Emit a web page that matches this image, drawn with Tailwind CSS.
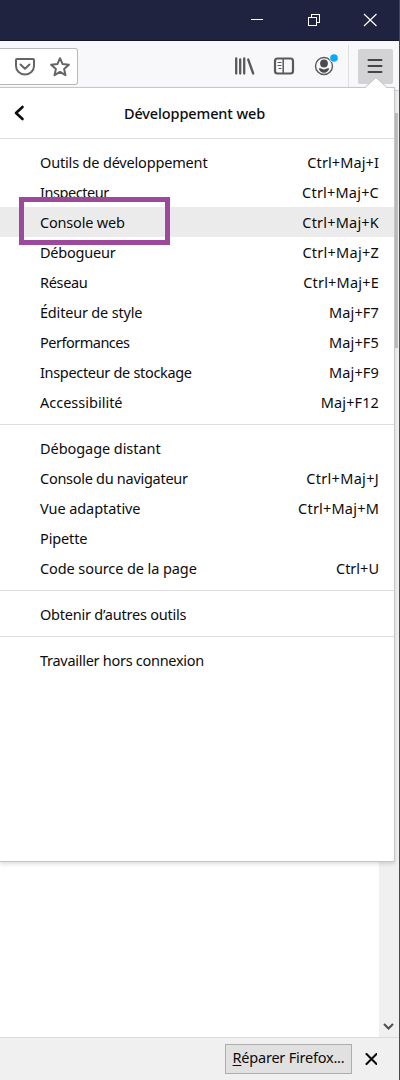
<!DOCTYPE html>
<html lang="fr">
<head>
<meta charset="utf-8">
<title>Développement web</title>
<script src="https://cdn.jsdelivr.net/npm/@tailwindcss/browser@4"></script>
</head>
<body class="bg-white overflow-hidden">
<div class="relative flex h-[1080px] w-[400px] flex-col overflow-hidden border-r border-[#484848] bg-white font-['Noto_Sans','Open_Sans',sans-serif] text-[14.5px] text-[#0c0c0d]">
  <!-- Title bar -->
  <header class="flex h-[41px] shrink-0 items-center justify-end border-b border-[#15172f] bg-[#202340]">
    <svg class="h-10 w-[171px]" viewBox="0 0 171 40" fill="none" stroke="#fff" stroke-width="1" shape-rendering="crispEdges">
      <path d="M23 19.5h12"/>
      <path d="M80.500 17.500h8v8h-8zM83.500 17v-2.500h8v8h-2.500"/>
      <path shape-rendering="auto" stroke-width="1.150" d="M136 14l12.500 12M148.500 14L136 26"/>
    </svg>
  </header>
  <!-- Toolbar -->
  <nav class="flex h-[50px] shrink-0 items-start border-b border-[#d5d5d7] bg-[#f8f8fa]">
    <div class="mt-[7px] flex h-[37px] w-[78px] items-center rounded-r-[3px] border border-l-0 border-[#b8b8ba] bg-white pl-[14px]">
      <svg class="h-5 w-[22px]" viewBox="0 0 22 20" fill="none" stroke="#656566" stroke-width="2" stroke-linecap="round" stroke-linejoin="round"><path d="M3 2h16a1 1 0 0 1 1 1v6a9 8.500 0 0 1-18 0V3a1 1 0 0 1 1-1z"/><path d="M6.500 7.500L11 11.800l4.500-4.300"/></svg>
      <svg class="ml-[13px] h-[22px] w-[22px]" viewBox="0 0 22 22" fill="none" stroke="#656566" stroke-width="2" stroke-linejoin="round"><path d="M11 2.200l2.600 5.900 6.300.600-4.800 4.200 1.400 6.300-5.500-3.300-5.500 3.300 1.400-6.300-4.800-4.200 6.300-.600z"/></svg>
    </div>
    <div class="ml-[155px] flex h-[50px] items-center">
      <svg class="h-[50px] w-[110px]" viewBox="0 0 110 50" fill="none" stroke="#59595b" stroke-width="2" stroke-linecap="round">
        <path d="M3.200 17.500v15M7.200 18.500v14M11.200 17.500v15M15.200 18.500l5 14" stroke-width="2.300"/>
        <rect x="42" y="17.500" width="18" height="15" rx="2.500" stroke-width="2.200"/><path d="M50.200 18v14" stroke-width="1.500"/><path d="M45 21.500h3M45 24.500h3M46 27.500h2" stroke-width="1.200"/>
        <circle cx="91" cy="25" r="8.500" stroke-width="1.400"/>
        <circle cx="91" cy="22.500" r="3.900" fill="#4b4b4d" stroke="none"/><path d="M85.800 27.500c2.500-.8 3.200 1 5.200 1s2.700-1.800 5.200-1c-.6 2.400-2.600 4.200-5.200 4.200s-4.600-1.800-5.200-4.200z" fill="#4b4b4d" stroke="none"/>
        <circle cx="101" cy="17" r="4.600" fill="#f8f8fa" stroke="none"/><circle cx="101" cy="17" r="3.800" fill="#0aa9f5" stroke="none"/>
      </svg>
    </div>
    <div class="mt-1 ml-[5px] h-[43px] w-px bg-[#dfdfe2]"></div>
    <div class="mt-2 ml-[9px] flex h-[35px] w-[35px] items-start rounded-[2px] bg-[#d3d3d5]">
      <svg class="mt-2 ml-2 h-[18px] w-[18px]" viewBox="0 0 18 18" stroke="#454547" stroke-width="2" stroke-linecap="round"><path d="M2.500 3h13M2.500 9h13M2.500 15h13"/></svg>
    </div>
  </nav>
  <!-- Page area with its scrollbar -->
  <main class="flex min-h-0 flex-1 justify-end">
    <div class="flex w-5 flex-col bg-[#f0f0f0] pt-[22px]">
      <div class="ml-[2px] h-[235px] w-[17px] bg-[#c2c2c2]"></div>
      <svg class="mt-auto mb-[5px] ml-1 h-[10px] w-[11px]" viewBox="0 0 11 10" fill="none" stroke="#505050" stroke-width="2.100"><path d="M1 2l4.500 4.500L10 2"/></svg>
    </div>
  </main>
  <!-- Notification bar -->
  <footer class="flex h-[43px] shrink-0 items-center justify-end border-t border-[#dcdcdc] bg-[#f0f0f0]">
    <button class="mt-[-1px] h-[30px] w-[127px] border border-[#adadad] bg-[#e1e1e1] pb-0.5 whitespace-nowrap tracking-[-0.22px]"><span class="underline underline-offset-2">R</span>éparer Firefox...</button>
    <svg class="mr-[22px] ml-[13px] h-3 w-3" viewBox="0 0 12 12" stroke="#0c0c0d" stroke-width="2.100" stroke-linecap="round"><path d="M1.500 1l10 10M11.500 1L1.500 11"/></svg>
  </footer>

  <!-- Developer panel -->
  <section class="absolute top-[87px] left-0 h-[775px] w-[395px] border-t border-r border-b border-[#c6c6c7] bg-white shadow-[0_2px_4px_rgba(0,0,0,0.14)]">
    <svg class="absolute -top-[11px] right-[7px] h-[11px] w-[22px]" viewBox="0 0 22 11"><path d="M0 11L11 .5 22 11z" fill="#fff"/><path d="M0 10.500L11 .5l11 10" fill="none" stroke="#c0c0c2"/></svg>
    <div class="relative flex h-[51px] items-center border-b border-[#dedede]">
      <svg class="ml-[13px] h-4 w-3" viewBox="0 0 12 16" fill="none" stroke="#0c0c0d" stroke-width="2.600" stroke-linecap="round" stroke-linejoin="round"><path d="M9.500 2L3 8l6.500 6"/></svg>
      <h1 class="mr-[30px] flex-1 pt-0.5 text-center font-medium tracking-[-0.12px]">Développement web</h1>
    </div>
    <ul class="py-2 [&>li]:flex [&>li]:h-[30px] [&>li]:items-center [&>li]:justify-between [&>li]:pt-0.5 [&>li]:pr-[15px] [&>li]:pl-10">
      <li><span class="tracking-[-0.17px]">Outils de développement</span><span class="tracking-[0.1px]">Ctrl+Maj+I</span></li>
      <li><span class="tracking-[-0.45px]">Inspecteur</span><span class="tracking-[0.2px]">Ctrl+Maj+C</span></li>
      <li class="bg-[#ebebeb]"><span class="tracking-[-0.18px]">Console web</span><span class="tracking-[0.2px]">Ctrl+Maj+K</span></li>
      <li><span class="tracking-[-0.22px]">Débogueur</span><span class="tracking-[0.25px]">Ctrl+Maj+Z</span></li>
      <li><span class="tracking-[-0.33px]">Réseau</span><span class="tracking-[0.2px]">Ctrl+Maj+E</span></li>
      <li><span class="tracking-[-0.19px]">Éditeur de style</span><span class="tracking-[0.16px]">Maj+F7</span></li>
      <li><span class="tracking-[-0.5px]">Performances</span><span class="tracking-[0.16px]">Maj+F5</span></li>
      <li><span class="tracking-[-0.32px]">Inspecteur de stockage</span><span class="tracking-[0.16px]">Maj+F9</span></li>
      <li><span>Accessibilité</span><span class="tracking-[0.1px]">Maj+F12</span></li>
    </ul>
    <ul class="-mt-px border-t border-[#dedede] pt-2 pb-[7px] [&>li]:flex [&>li]:h-[30px] [&>li]:items-center [&>li]:justify-between [&>li]:pt-0.5 [&>li]:pr-[15px] [&>li]:pl-10">
      <li><span class="tracking-[-0.06px]">Débogage distant</span></li>
      <li><span class="tracking-[-0.28px]">Console du navigateur</span><span class="tracking-[0.3px]">Ctrl+Maj+J</span></li>
      <li><span class="tracking-[-0.07px]">Vue adaptative</span><span class="tracking-[0.2px]">Ctrl+Maj+M</span></li>
      <li><span class="tracking-[-0.14px]">Pipette</span></li>
      <li><span class="tracking-[-0.09px]">Code source de la page</span><span>Ctrl+U</span></li>
    </ul>
    <div class="flex h-[46px] items-center border-t border-[#dedede] pt-[2px] pl-10"><span class="tracking-[-0.22px]">Obtenir d’autres outils</span></div>
    <div class="flex h-[46px] items-center border-t border-[#dedede] pt-[2px] pl-10"><span class="tracking-[-0.28px]">Travailler hors connexion</span></div>
  </section>
  <!-- Highlight frame over the selected entry -->
  <div class="absolute top-[197px] left-[19px] h-[48px] w-[151px] border-[5px] border-[#9c489b]"></div>
  <div class="absolute top-[237px] -right-px h-[21px] w-px bg-[#f0f0f0]"></div>
</div>
</body>
</html>
